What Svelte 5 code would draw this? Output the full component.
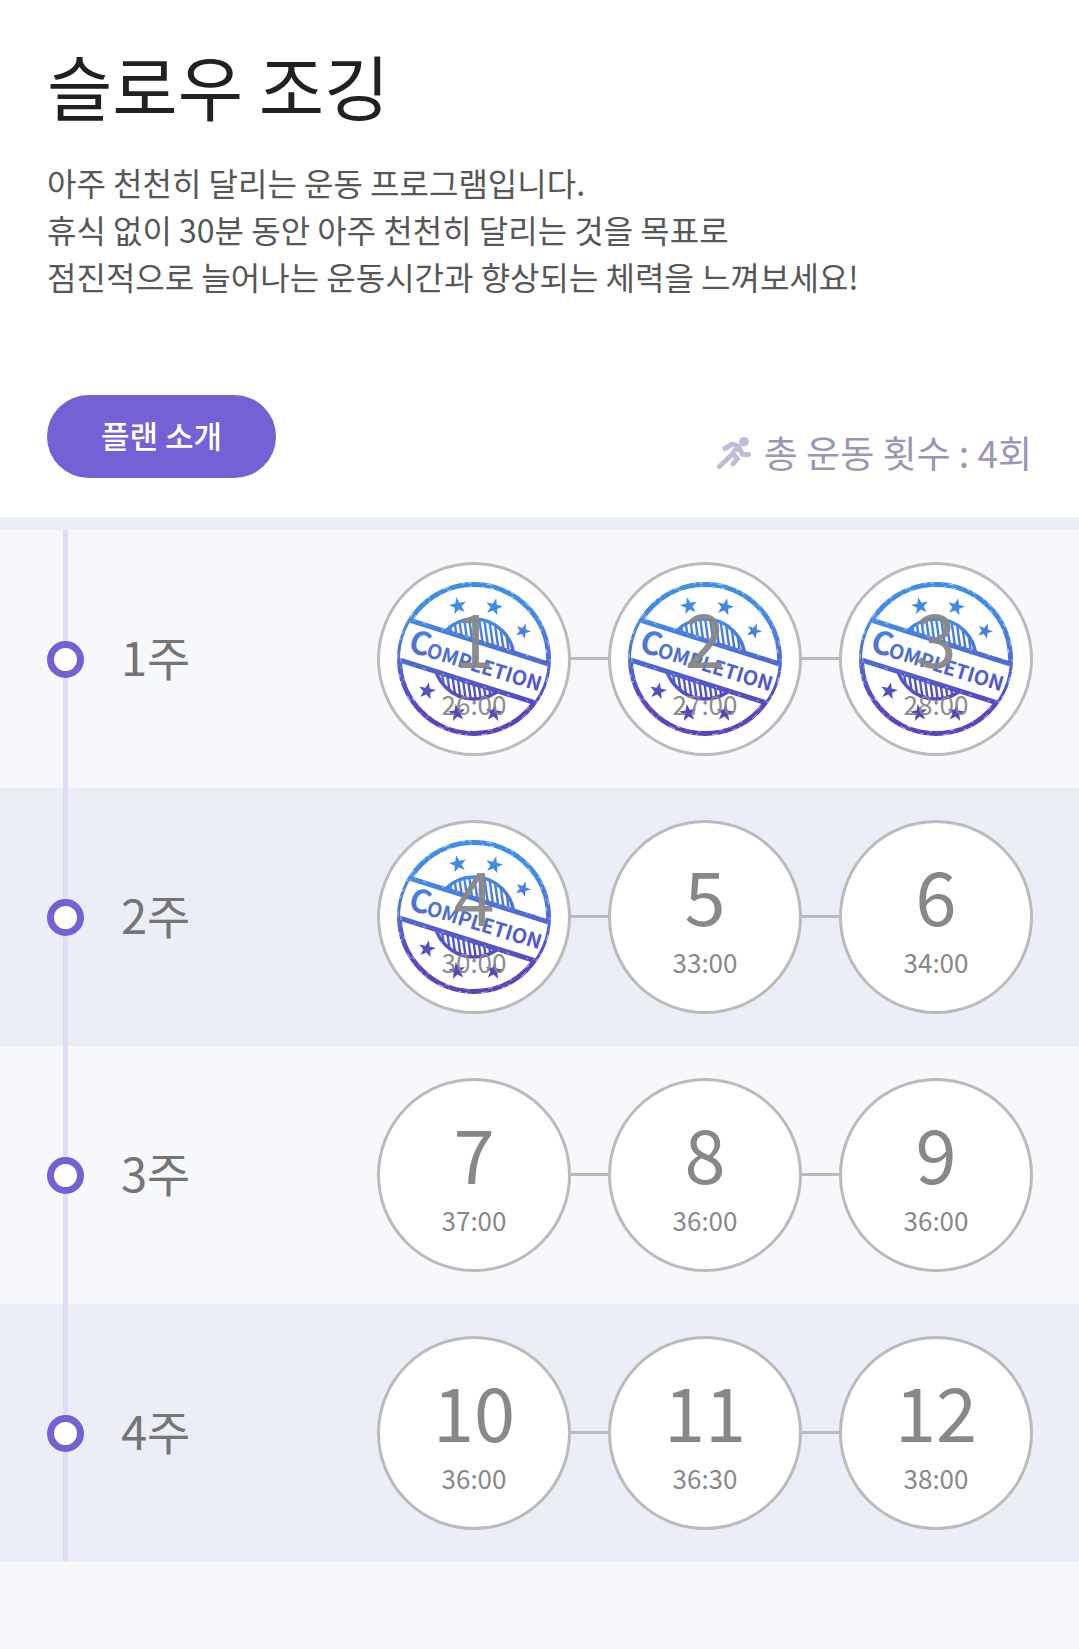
<script>
  const weeks = [
    { label: '1주', days: [['1', '26:00', true], ['2', '27:00', true], ['3', '28:00', true]] },
    { label: '2주', days: [['4', '30:00', true], ['5', '33:00', false], ['6', '34:00', false]] },
    { label: '3주', days: [['7', '37:00', false], ['8', '36:00', false], ['9', '36:00', false]] },
    { label: '4주', days: [['10', '36:00', false], ['11', '36:30', false], ['12', '38:00', false]] }
  ];

  // Five-pointed star as polygon points; turn is in degrees
  function star(cx, cy, r, turn) {
    return Array.from({ length: 10 }, (_, i) => {
      const a = ((i * 36 - 90 + turn) * Math.PI) / 180;
      const d = i % 2 ? r * 0.4 : r;
      return `${(cx + d * Math.cos(a)).toFixed(1)},${(cy + d * Math.sin(a)).toFixed(1)}`;
    }).join(' ');
  }
  const stars = [
    star(61, 24, 9, -12), star(97, 25, 9, 14), star(126, 49, 8, 22),
    star(30, 109, 9, 12), star(60, 131, 9, -8), star(97, 131, 9, 8)
  ];
  const hatches = Array.from({ length: 17 }, (_, i) => 32 + i * 5);
</script>

<svelte:head><title>슬로우 조깅</title></svelte:head>

{#snippet shades()}
  <stop offset="0" stop-color="#3b8ee6" />
  <stop offset="0.25" stop-color="#4489e6" />
  <stop offset="0.5" stop-color="#4e6bd3" />
  <stop offset="0.75" stop-color="#554bc4" />
  <stop offset="1" stop-color="#5a43b4" />
{/snippet}

{#snippet stamp(id)}
  <svg class="stamp" viewBox="0 0 154 154" role="img" aria-label="Completion">
    <defs>
      <linearGradient id="ink-{id}" gradientUnits="userSpaceOnUse" x1="0" y1="0" x2="0" y2="154">
        {@render shades()}
      </linearGradient>
      <linearGradient
        id="word-{id}"
        gradientUnits="userSpaceOnUse"
        gradientTransform="rotate(-17) translate(-10 -69)"
        x1="0" y1="0" x2="0" y2="154"
      >
        {@render shades()}
      </linearGradient>
      <clipPath id="disc-{id}"><circle cx="77" cy="77" r="74" /></clipPath>
      <clipPath id="seal-{id}"><circle cx="77" cy="77" r="40" /></clipPath>
    </defs>
    <circle cx="77" cy="77" r="74.500" fill="none" stroke="url(#ink-{id})" stroke-width="5" />
    <g clip-path="url(#seal-{id})" stroke="url(#ink-{id})">
      {#each hatches as x}
        <path d="M{x} 36L{x + 12} 119" stroke-width="2.400" />
      {/each}
    </g>
    <circle cx="77" cy="77" r="40" fill="none" stroke="url(#ink-{id})" stroke-width="3.500" />
    <g clip-path="url(#disc-{id})">
      <path d="M-4 33L158 84V127L-4 76Z" fill="#fff" />
      <path d="M-4 33L158 84M-4 76L158 127" stroke="url(#ink-{id})" stroke-width="5" />
    </g>
    {#each stars as points}
      <polygon {points} fill="url(#ink-{id})" />
    {/each}
    <g fill="url(#word-{id})" transform="translate(10 69) rotate(17)" class="word">
      <text font-size="32">C</text>
      <text x="19" font-size="20">OMPLETION</text>
    </g>
    <circle class="wear" cx="77" cy="77" r="76" />
    <circle class="wear fine" cx="77" cy="77" r="73" />
    <path class="wear sparse" d="M3 34L150 80M3 79L140 122" />
  </svg>
{/snippet}

<main>
  <header>
    <h1>슬로우 조깅</h1>
    <p class="about">
      아주 천천히 달리는 운동 프로그램입니다.<br />
      휴식 없이 30분 동안 아주 천천히 달리는 것을 목표로<br />
      점진적으로 늘어나는 운동시간과 향상되는 체력을 느껴보세요!
    </p>
    <div class="actions">
      <button type="button">플랜 소개</button>
      <p class="total">
        <svg class="runner" viewBox="0 0 36 34" aria-hidden="true">
          <circle cx="28" cy="6.700" r="4.800" />
          <path d="M9 13.500L16.500 9L23 11.500L17.500 17M22.500 11.500L26.500 19.500H32.500M3.500 31.500L16.500 19L21.500 23.500L17 29" />
        </svg>
        <span>총 운동 횟수 : 4회</span>
      </p>
    </div>
  </header>

  <ol class="weeks">
    {#each weeks as week}
      <li class="week">
        <span class="rail"><span class="dot"></span></span>
        <h2>{week.label}</h2>
        <ol class="days">
          {#each week.days as [day, time, done]}
            <li class="day" class:done>
              {#if done}{@render stamp(day)}{/if}
              <span class="number">{day}</span>
              <span class="time">{time}</span>
            </li>
          {/each}
        </ol>
      </li>
    {/each}
  </ol>
</main>

<style>
  :global(body) {
    margin: 0;
    background: #f6f8fc;
  }
  main {
    font-family: 'Noto Sans CJK KR', 'Noto Sans', sans-serif;
  }
  h1, h2, p, ol {
    margin: 0;
    padding: 0;
    font-weight: 400;
    list-style: none;
  }
  header {
    padding: 32px 47px 39px;
    background: #fff;
    border-bottom: 13px solid #eceff7;
  }
  h1 {
    font-size: 71px;
    line-height: 104px;
    color: #212121;
  }
  .about {
    margin-top: 23px;
    font-size: 32px;
    line-height: 47px;
    color: #575757;
  }
  .actions {
    display: flex;
    justify-content: space-between;
    align-items: flex-end;
    margin-top: 95px;
  }
  button {
    padding: 0 54px 4px;
    border: 0;
    border-radius: 42px;
    background: #7561d6;
    color: #fff;
    font: 500 31px/79px 'Noto Sans CJK KR', sans-serif;
  }
  .total {
    display: flex;
    align-items: center;
    gap: 12px;
    font-size: 37px;
    line-height: 52px;
    color: #9b95ba;
  }
  .runner {
    width: 36px;
    height: 34px;
    fill: #c0bbd8;
  }
  .runner path {
    fill: none;
    stroke: #c0bbd8;
    stroke-width: 5;
    stroke-linecap: round;
    stroke-linejoin: round;
  }
  .week {
    display: flex;
    align-items: center;
    padding: 0 46px 0 47px;
    background: #f6f8fc;
  }
  .week:nth-child(even) {
    background: #ebeef6;
  }
  .rail {
    display: flex;
    align-items: center;
    align-self: stretch;
    width: 37px;
    background: linear-gradient(#e1dcf3, #e1dcf3) center / 5px 100% no-repeat;
  }
  .dot {
    box-sizing: border-box;
    width: 37px;
    height: 37px;
    border: 7px solid #7561d3;
    border-radius: 50%;
    background: #fff;
  }
  h2 {
    margin-left: 37px;
    padding-bottom: 6px;
    font-size: 47px;
    line-height: 70px;
    color: #757575;
  }
  .days {
    display: flex;
    gap: 37px;
    margin-left: auto;
    padding: 32px 0;
  }
  .day {
    position: relative;
    box-sizing: border-box;
    display: flex;
    flex-direction: column;
    align-items: center;
    gap: 6px;
    width: 194px;
    height: 194px;
    padding-top: 29px;
    border: 3px solid #bbb;
    border-radius: 50%;
    background: #fff;
    color: #888;
  }
  .day + .day::before {
    content: '';
    position: absolute;
    top: 92px;
    right: 100%;
    width: 42px;
    height: 3px;
    background: #bbb;
  }
  .number,
  .time {
    position: relative;
  }
  .done .number,
  .done .time {
    opacity: 0.95;
  }
  .number {
    font-size: 74px;
    line-height: 84px;
  }
  .time {
    font-size: 26px;
    line-height: 40px;
  }
  .stamp {
    position: absolute;
    inset: 17px;
  }
  .word {
    font-family: 'Noto Sans CJK KR', sans-serif;
    font-weight: 700;
  }
  .wear {
    fill: none;
    stroke: #fff;
    stroke-width: 1;
    stroke-opacity: 0.6;
    stroke-dasharray: 3 9 1 5 6 14 2 4;
  }
  .fine {
    stroke-dasharray: 1 7 4 19 2 11;
  }
  .sparse {
    stroke-opacity: 0.5;
    stroke-dasharray: 2 13 1 8 3 17;
  }
</style>
